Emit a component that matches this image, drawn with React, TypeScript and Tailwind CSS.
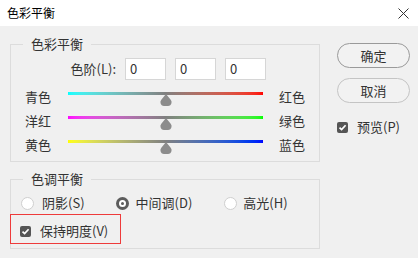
import type { ReactNode } from 'react'

const font = { fontFamily: '"Noto Sans CJK SC", "Noto Sans", sans-serif' }

function Thumb() {
  return (
    <svg width="12" height="12" viewBox="0 0 12 12" className="absolute left-1/2 top-[5px] -translate-x-1/2">
      <path d="M6 0 L10.5 5.5 Q12 7 11.5 9 Q10.8 12 8 12 L4 12 Q1.2 12 0.5 9 Q0 7 1.5 5.5 Z" fill="#8c8c8c" />
    </svg>
  )
}

function SliderRow({ left, right, gradient }: { left: string; right: string; gradient: string }) {
  return (
    <div className="flex h-[24px] items-center">
      <span className="w-[26px] leading-[16px]">{left}</span>
      <div className="relative ml-[17px] h-[16px] w-[195px]">
        <div className={`absolute left-0 right-0 top-[3px] h-[3px] ${gradient}`} />
        <Thumb />
      </div>
      <span className="ml-[16px] leading-[16px]">{right}</span>
    </div>
  )
}

function Group({ title, children, className }: { title: string; children: ReactNode; className: string }) {
  return (
    <div className={`relative w-[310px] border border-[#dcdcdc] ${className}`}>
      <span className="absolute left-[12px] top-[-10px] h-[18px] bg-[#f0f0f0] px-[8px] leading-[18px]">{title}</span>
      {children}
    </div>
  )
}

function Checkbox() {
  return (
    <span className="flex h-[11px] w-[11px] shrink-0 items-center justify-center rounded-[2px] bg-[#555]">
      <svg width="9" height="9" viewBox="0 0 9 9">
        <path d="M1.5 4.6 L3.6 6.6 L7.6 2.2" fill="none" stroke="#fff" strokeWidth="1.7" />
      </svg>
    </span>
  )
}

function Radio({ checked }: { checked?: boolean }) {
  if (checked) {
    return (
      <span className="flex h-[13px] w-[13px] shrink-0 items-center justify-center rounded-full bg-[#5c5c5c]">
        <span className="flex h-[7px] w-[7px] items-center justify-center rounded-full bg-white">
          <span className="block h-[3px] w-[3px] rounded-full bg-[#5c5c5c]" />
        </span>
      </span>
    )
  }
  return <span className="block h-[13px] w-[13px] shrink-0 rounded-full border border-[#cfcfcf] bg-white" />
}

export default function App() {
  return (
    <div className="h-[258px] w-[418px] overflow-hidden text-[13px] text-[#333]" style={font}>
      {/* Title bar */}
      <div className="flex h-[26px] items-center justify-between bg-white pl-[7px] pr-[9px]">
        <span className="text-[12px] leading-[14px] text-black">色彩平衡</span>
        <svg width="11" height="11" viewBox="0 0 11 11">
          <path d="M0.5 0.5 L10.5 10.5 M10.5 0.5 L0.5 10.5" stroke="#333" strokeWidth="1" />
        </svg>
      </div>

      <div className="flex h-[232px] bg-[#f0f0f0]">
        {/* Left column */}
        <div className="ml-[10px] mt-[18px] flex flex-col">
          <Group title="色彩平衡" className="h-[118px] pl-[14px] pt-[13px]">
            <div className="-ml-[14px] flex items-center">
              <span className="w-[114px] pr-[9px] text-right leading-[16px]">色阶(L):</span>
              <div className="flex gap-[9px]">
                {[0, 1, 2].map((i) => (
                  <div key={i} className="flex h-[22px] w-[41px] items-center border border-[#d6d6d6] bg-white pl-[4px] leading-[16px]">0</div>
                ))}
              </div>
            </div>
            <div className="mt-[5px]">
              <SliderRow left="青色" right="红色" gradient="bg-linear-to-r from-[#00ffff] via-[#808080] to-[#ff0000]" />
              <SliderRow left="洋红" right="绿色" gradient="bg-linear-to-r from-[#ff00ff] via-[#808080] to-[#00ff00]" />
              <SliderRow left="黄色" right="蓝色" gradient="bg-linear-to-r from-[#ffff00] via-[#808080] to-[#0000ff]" />
            </div>
          </Group>

          <Group title="色调平衡" className="mt-[17px] h-[70px] pt-[15px]">
            <div className="flex h-[16px] items-center pl-[10px]">
              <Radio />
              <span className="ml-[8px] leading-[16px]">阴影(S)</span>
              <span className="ml-[31px] flex"><Radio checked /></span>
              <span className="ml-[7px] leading-[16px]">中间调(D)</span>
              <span className="ml-[32px] flex"><Radio /></span>
              <span className="ml-[6px] leading-[16px]">高光(H)</span>
            </div>
            <div className="mt-[12px] flex h-[16px] items-center pl-[9px]">
              <Checkbox />
              <span className="ml-[9px] leading-[16px]">保持明度(V)</span>
            </div>
            {/* annotation box */}
            <div className="absolute left-[-1px] top-[34px] h-[30px] w-[111px] border border-[#ee3b3b]" />
          </Group>
        </div>

        {/* Right column */}
        <div className="ml-[17px] mt-[17px] flex w-[73px] flex-col">
          <button className="h-[25px] w-[73px] rounded-full border border-[#9a9a9a] bg-[#f2f2f2] leading-[16px]">确定</button>
          <button className="mt-[10px] h-[25px] w-[73px] rounded-full border border-[#c4c4c4] bg-[#f2f2f2] leading-[16px]">取消</button>
          <div className="mt-[16px] flex items-center">
            <Checkbox />
            <span className="ml-[9px] leading-[16px]">预览(P)</span>
          </div>
        </div>
      </div>
    </div>
  )
}
